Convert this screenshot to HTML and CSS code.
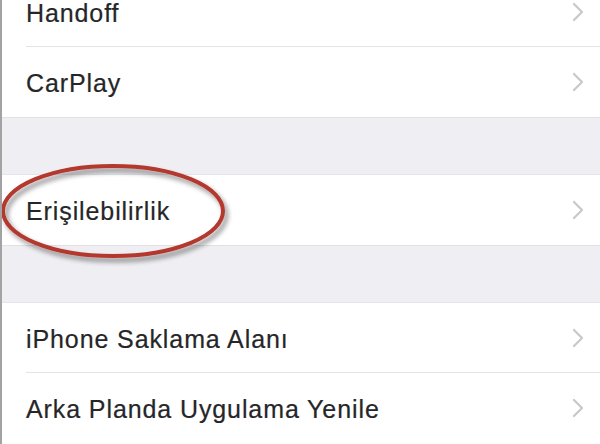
FILE: index.html
```html
<!DOCTYPE html>
<html>
<head>
<meta charset="utf-8">
<link rel="stylesheet" href="styles.css">
</head>
<body>
<div class="screen">
  <div class="list">
    <div class="group">
      <div class="row"><span class="label">Handoff</span><svg class="chev" viewBox="0 0 12 20" width="12" height="20"><polyline points="2,2 10,10 2,18"/></svg></div>
      <div class="row"><span class="label">CarPlay</span><svg class="chev" viewBox="0 0 12 20" width="12" height="20"><polyline points="2,2 10,10 2,18"/></svg></div>
    </div>
    <div class="gap"></div>
    <div class="group">
      <div class="row"><span class="label">Erişilebilirlik</span><svg class="chev" viewBox="0 0 12 20" width="12" height="20"><polyline points="2,2 10,10 2,18"/></svg></div>
    </div>
    <div class="gap"></div>
    <div class="group">
      <div class="row"><span class="label">iPhone Saklama Alanı</span><svg class="chev" viewBox="0 0 12 20" width="12" height="20"><polyline points="2,2 10,10 2,18"/></svg></div>
      <div class="row"><span class="label">Arka Planda Uygulama Yenile</span><svg class="chev" viewBox="0 0 12 20" width="12" height="20"><polyline points="2,2 10,10 2,18"/></svg></div>
    </div>
  </div>
  <svg class="circle" viewBox="0 0 600 444" width="600" height="444">
    <defs>
      <filter id="sh" x="-20%" y="-40%" width="140%" height="180%">
        <feGaussianBlur in="SourceAlpha" stdDeviation="2.5"/>
        <feOffset dx="3" dy="4" result="b"/>
        <feComponentTransfer><feFuncA type="linear" slope="0.45"/></feComponentTransfer>
        <feMerge><feMergeNode/><feMergeNode in="SourceGraphic"/></feMerge>
      </filter>
    </defs>
    <ellipse cx="113" cy="211" rx="110" ry="45" fill="none" stroke="#b3382d" stroke-width="4" filter="url(#sh)"/>
  </svg>
</div>
</body>
</html>
```
FILE: styles.css
```css
html, body {
  margin: 0;
  padding: 0;
  background: #ffffff;
}
.screen {
  position: relative;
  width: 600px;
  height: 444px;
  overflow: hidden;
  border-left: 2px solid #a3a3a3;
  box-sizing: border-box;
  background: #ffffff;
}
.list {
  margin-top: -23px;
  display: flex;
  flex-direction: column;
}
.group {
  display: flex;
  flex-direction: column;
  background: #ffffff;
}
.row {
  position: relative;
  height: 70px;
  display: flex;
  align-items: center;
  justify-content: space-between;
  padding: 0 16px 0 24px;
  box-sizing: border-box;
}
.group .row:not(:last-child)::after {
  content: "";
  position: absolute;
  left: 24px;
  right: 0;
  bottom: 0;
  height: 1px;
  background: #e4e4e6;
}
.label {
  font-family: "Liberation Sans", Arial, sans-serif;
  font-size: 25px;
  letter-spacing: 0.9px;
  color: #262628;
  margin-top: 3px;
  -webkit-text-stroke: 0.2px #262628;
}
.chev {
  fill: none;
  stroke: #c8c8cc;
  stroke-width: 2.2;
  stroke-linecap: round;
  stroke-linejoin: round;
  margin-right: 0;
}
.gap {
  height: 58px;
  background: #efeff3;
  border-top: 1px solid #e0e0e3;
  border-bottom: 1px solid #e6e6ea;
  box-sizing: border-box;
}
.circle {
  position: absolute;
  left: -2px;
  top: 0;
  pointer-events: none;
}
```
